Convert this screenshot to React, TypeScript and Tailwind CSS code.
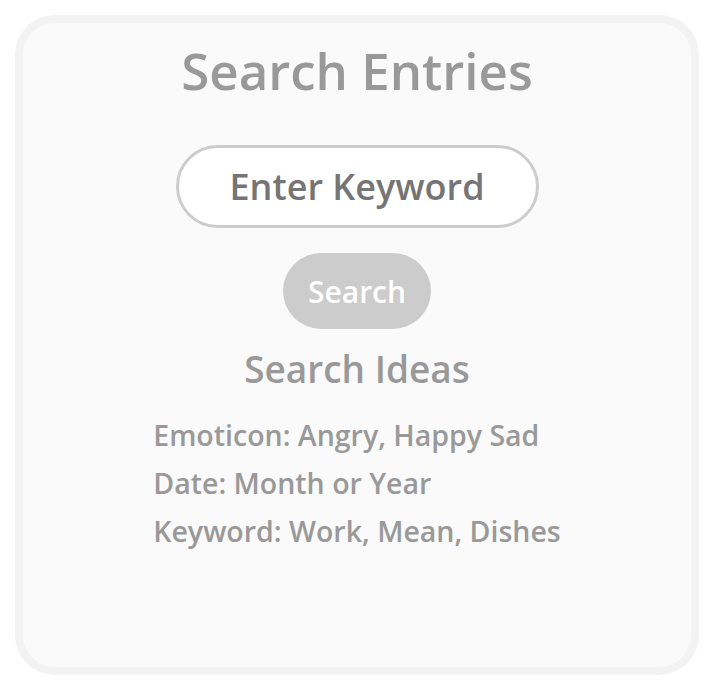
import { useState } from "react";

const IDEAS = [
	"Emoticon: Angry, Happy Sad",
	"Date: Month or Year",
	"Keyword: Work, Mean, Dishes",
];

export default function App() {
	const [keyword, setKeyword] = useState("");

	return (
		<div className="min-h-screen bg-white pl-[15px] pt-[15px] font-['Open_Sans',sans-serif]">
			<div className="flex h-[660px] w-[684px] flex-col items-center rounded-[40px] border-8 border-[#f3f3f3] bg-[#fafafa]">
				<h1 className="mt-[15px] text-[51px] font-semibold leading-[64px] text-[#999999]">
					Search Entries
				</h1>

				<input
					type="text"
					value={keyword}
					onChange={(e) => setKeyword(e.target.value)}
					placeholder="Enter Keyword"
					className="mt-[43px] h-[83px] w-[363px] rounded-full border-[3px] border-[#cccccc] bg-white text-center text-[36px] font-semibold text-[#757575] placeholder:text-[#757575] outline-none"
				/>

				<button
					type="button"
					className="mt-[25px] h-[76px] w-[148px] rounded-full bg-[#cccccc] text-[30px] font-semibold text-white"
				>
					Search
				</button>

				<h2 className="mt-[16px] text-[37px] font-semibold leading-[48px] text-[#999999]">
					Search Ideas
				</h2>

				<ul className="mt-[22px] flex flex-col gap-[8px] text-left text-[28.5px] font-semibold leading-[40px] text-[#999999]">
					{IDEAS.map((idea) => (
						<li key={idea}>{idea}</li>
					))}
				</ul>
			</div>
		</div>
	);
}
